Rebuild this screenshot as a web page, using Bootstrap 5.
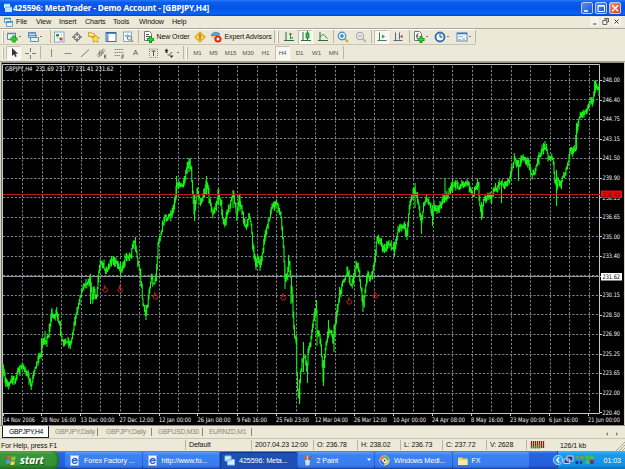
<!DOCTYPE html>
<html lang="en">
  <head>
    <meta charset="UTF-8" />
    <meta name="viewport" content="width=device-width, initial-scale=1.0" />
    <title>425596: MetaTrader - Demo Account - [GBPJPY,H4]</title>
    <link
      href="https://cdn.jsdelivr.net/npm/bootstrap@5.3.0/dist/css/bootstrap.min.css"
      rel="stylesheet"
    />
    <style>
      body {
        width: 625px;
        height: 469px;
        overflow: hidden;
        background: #ece9d8;
        color: #111;
        font-family: "Liberation Sans", Arial, sans-serif;
        font-size: 7px;
        line-height: 9px;
        letter-spacing: -0.1px;
      }
      svg {
        display: block;
        flex: none;
      }
      .title-bar {
        height: 16px;
        background: linear-gradient(#2a7af5, #0a5cf0 15%, #0453e0 50%, #0663fb 85%, #0344bf);
        color: #fff;
        font: bold 8.2px "Noto Sans", sans-serif;
        letter-spacing: -0.1px;
      }
      .gap-thin {
        gap: 1.5px;
      }
      .win-btn {
        width: 12.5px;
        height: 12.5px;
        border: 1px solid #b9cdf8;
        border-radius: 2px;
        background: linear-gradient(135deg, #5b8df5, #1c4fd8);
      }
      .win-close {
        background: linear-gradient(135deg, #f09a7e, #cf3a12);
      }
      .menu-bar {
        display: grid;
        grid-template-columns: 16px 20px 23px 26px 28px 26px 33px 1fr auto;
        height: 12px;
        font-size: 7.2px;
      }
      .mdi-btn {
        width: 9.5px;
        height: 9px;
        background: #f5f3ea;
      }
      .tool-rows {
        height: 34px;
        border-top: 1px solid #aca899;
        border-bottom: 1px solid #aca899;
      }
      .tool-row {
        display: grid;
        align-items: center;
        justify-items: center;
        height: 16px;
        white-space: nowrap;
      }
      .row-main {
        width: 476px;
        border-top: 1px solid #fff;
        border-bottom: 1px solid #c9c5b2;
        grid-template-columns:
          6px 12px 9px 12px 9px 4px 14px 21px 13px 21px 13px 8px 14px 34px 19px 14px
          50px 2px 6px 16px 17px 18px 2px 18px 17px 4px 17px 16px 6px 13px 9px 12px 10px
          12px 6px 2px;
      }
      .row-draw {
        width: 344px;
        font-size: 6.2px;
        color: #555;
        grid-template-columns:
          6px 15px 17px 4px repeat(7, 17px) 15px 6px 2px 6px 15px 17px 17px 18px
          repeat(5, 17px) 2px;
      }
      .text-tool {
        font-size: 7.5px;
      }
      .grip {
        width: 2px;
        height: 12px;
        border-left: 1px solid #fff;
        border-right: 1px solid #b5b19f;
      }
      .rule {
        width: 1px;
        height: 13px;
        background: #bab6a4;
      }
      .caret {
        justify-self: start;
        margin-left: 1px;
        border: 1.8px solid transparent;
        border-top-color: #111;
        border-bottom: 0;
      }
      .pressed {
        display: flex;
        align-items: center;
        justify-content: center;
        width: 15px;
        height: 14px;
        background: #f8f7f2;
        border: 1px solid #c3bfae;
        border-right-color: #fff;
        border-bottom-color: #fff;
      }
      .chart {
        height: 363px;
        background: #000;
      }
      .chart text {
        font-family: "DejaVu Sans Condensed", "DejaVu Sans", sans-serif;
        font-size: 6.2px;
        letter-spacing: 0;
        fill: #f4f4f4;
      }
      .sheet-tabs {
        display: grid;
        grid-template-columns: 2px 47px 49px 54px 51px 49px 1fr auto;
        height: 14px;
        border-top: 1px solid #8f8c80;
        color: #8a8778;
        font-size: 6.7px;
        letter-spacing: -0.2px;
      }
      .sheet-tab {
        height: 8px;
        margin-top: 2px;
        line-height: 8px;
        padding-left: 6px;
        border-right: 1px solid #8a8778;
      }
      .sheet-tab.active {
        height: 12px;
        margin-top: 0;
        line-height: 11px;
        background: #fff;
        color: #000;
        border: 1px solid #222;
        border-top: 0;
      }
      .status-bar {
        display: grid;
        align-items: center;
        grid-template-columns: 185px 66px 62px 44px 43px 42px 44px 40px 30px 1fr 9px;
        height: 13px;
        border-top: 1px solid #c9c5b2;
        white-space: nowrap;
      }
      .status-hint {
        padding-left: 1px;
      }
      .status-cell {
        height: 10px;
        padding-left: 3px;
        border-left: 1px solid #b9b5a4;
      }
      .task-bar {
        height: 18px;
        background: linear-gradient(#4a8cf5, #2765e0 15%, #245edb 80%, #1941a5);
        color: #fff;
        font-size: 7.2px;
        letter-spacing: -0.1px;
      }
      .start-btn {
        width: 59px;
        margin-right: 6px;
        padding-left: 6px;
        border-radius: 0 6px 6px 0;
        background: linear-gradient(#5fb45c, #3a963a 18%, #349234 75%, #236e24);
        box-shadow: inset -2px 0 2px #276f28;
        font: italic bold 10.5px "Noto Sans", sans-serif;
        text-shadow: 1px 1px 1px #1c4d1c;
      }
      .task-btn {
        width: 76.5px;
        height: 16px;
        border-radius: 2px;
        background: linear-gradient(#5d9bfa, #3c81f3 20%, #3a7cee 80%, #2c66d2);
        margin-right: 1px;
        white-space: nowrap;
      }
      .task-btn.current {
        background: #1e4fb5;
        box-shadow: inset 1px 1px 1px #123783;
      }
      .tray {
        width: 68px;
        background: linear-gradient(#3fb5f8, #189bec 20%, #1290e3 80%, #0d70b8);
        border-left: 1px solid #0d4da8;
      }
      .tray-icons {
        margin-left: -6px;
      }
    </style>
  </head>
  <body class="d-flex flex-column m-0">
    <!-- Title bar -->
    <header class="title-bar d-flex align-items-center">
      <svg width="9" height="10" viewBox="0 0 9 10" class="ms-1">
        <rect x="0" y="1" width="6" height="4" fill="#dff" />
        <rect x="1" y="4" width="7" height="5" fill="#bfe4fb" />
        <path d="M0 1h6M1 4h7" stroke="#5bb4ee" />
      </svg>
      <span class="flex-grow-1">425596: MetaTrader - Demo Account - [GBPJPY,H4]</span>
      <div class="d-flex pe-1 gap-thin">
        <div class="win-btn">
          <svg width="10" height="10"><path d="M2 8h4" stroke="#fff" stroke-width="1.6" /></svg>
        </div>
        <div class="win-btn">
          <svg width="10" height="10"><path d="M2 2.5h6.5v6H2zM2 3.2h6" fill="none" stroke="#fff" /></svg>
        </div>
        <div class="win-btn win-close">
          <svg width="10" height="10"><path d="M2.2 2.2l6 6M8.2 2.2l-6 6" stroke="#fff" stroke-width="1.4" /></svg>
        </div>
      </div>
    </header>

    <!-- Menu -->
    <nav class="menu-bar align-items-center">
      <svg width="9" height="10" viewBox="0 0 9 10" class="ms-1">
        <path d="M.5 1.5h6v4h-6zM2.5 4.5h6v5h-6z" fill="#e9f4fb" stroke="#6aa5cc" />
        <path d="M0 1.5h7M2 4.8h7" stroke="#3a8cc4" stroke-width="1.3" />
      </svg>
      <span>File</span><span>View</span><span>Insert</span><span>Charts</span><span>Tools</span><span>Window</span><span>Help</span>
      <div class="d-flex me-1 gap-thin">
        <div class="mdi-btn"><svg width="9" height="9"><path d="M3 7h3.5" stroke="#444" /></svg></div>
        <div class="mdi-btn"><svg width="9" height="9"><path d="M3.5 1.5h4v3.5h-1.5M1.8 3.5h4v4h-4zM3 2h5" fill="none" stroke="#555" stroke-width=".9" /></svg></div>
        <div class="mdi-btn"><svg width="9" height="9"><path d="M2.5 2.5l4 4M6.5 2.5l-4 4" stroke="#333" /></svg></div>
      </div>
    </nav>

    <!-- Toolbars -->
    <section class="tool-rows">
      <div class="tool-row row-main">
        <i class="grip"></i>
        <svg width="12" height="12"><path d="M1.5 2.5h8v6h-8z" fill="#eef6f0" stroke="#6b8f86" /><path d="M1 2.5h9" stroke="#4a90b8" stroke-width="1.5" /><path d="M8 4.5v7M4.5 8h7" stroke="#0a8a18" stroke-width="3.2" /><path d="M8 5v6M5 8h6" stroke="#2fd83c" stroke-width="1.5" /></svg>
        <i class="caret"></i>
        <svg width="12" height="12"><path d="M1.5 1.5h7v5h-7zM3.5 6.5h8v4h-8z" fill="#e4f0fa" stroke="#5c8fbd" /><path d="M1 2h8M2 4.5h8" stroke="#5f97c8" stroke-width="1.5" /></svg>
        <i class="caret"></i>
        <i class="rule"></i>
        <svg width="12" height="12"><rect x="1.5" y="1" width="9.5" height="10" fill="#f6fbff" stroke="#7da7c8" /><rect x="3" y="3" width="3" height="2.5" fill="#24a324" /><rect x="6.5" y="6.5" width="3" height="3" fill="#e23b23" /><path d="M4 7h1M8 4h1" stroke="#79b" /></svg>
        <svg width="12" height="12"><circle cx="6" cy="6" r="3.2" fill="none" stroke="#666" /><path d="M6 1v4M6 7v4M1 6h4M7 6h4" stroke="#555" /></svg>
        <svg width="12" height="12"><path d="M.5 1.5h3l1 1h2v3h-6z" fill="#fbe38b" stroke="#d5a32a" /><path d="M7.5 4l1.3 2.4 2.7.3-2 1.9.6 2.7-2.6-1.3L5 11.300l.5-2.7-2-1.9 2.7-.3z" fill="#ffe04a" stroke="#c79a16" stroke-width=".8" /></svg>
        <svg width="12" height="12"><rect x="1" y="1.5" width="10" height="9" fill="#fff" stroke="#3f6f9f" /><path d="M1 2h10" stroke="#2d68aa" stroke-width="1.5" /><path d="M2.5 3v7" stroke="#6d9dd0" stroke-width="2" /></svg>
        <svg width="12" height="12"><rect x="1.5" y="1" width="8" height="9.5" fill="#f5faff" stroke="#8caac6" /><path d="M3 4l1.5 2 1-2.5L7 6" fill="none" stroke="#48a" stroke-width=".8" /><circle cx="7.5" cy="7" r="2.2" fill="#d4e9f7" stroke="#5a87ad" /><path d="M9 8.5l2.2 2.5" stroke="#c49a3c" stroke-width="1.4" /></svg>
        <i class="rule"></i>
        <svg width="12" height="12"><path d="M1.5.5h5l2 2v7h-7z" fill="#fff" stroke="#777" /><path d="M3 3.5h3M3 5.5h3" stroke="#555" /><path d="M7.5 5v7M4 8.5h7" stroke="#0a8a18" stroke-width="3" /><path d="M7.5 5.5v6M4.5 8.5h6" stroke="#2fd83c" stroke-width="1.3" /></svg>
        <span>New Order</span>
        <svg width="12" height="12"><path d="M6 .8l5.2 5.2L6 11.2.8 6z" fill="#fbcf3a" stroke="#c48f14" /><path d="M6 3v3.8M6 7.7v1.3" stroke="#8a5a00" stroke-width="1.2" /></svg>
        <svg width="12" height="12"><path d="M1 4.5C2 1 7 0 10 3l-2 2H2z" fill="#55a5d8" stroke="#3a7fb0" stroke-width=".7" /><path d="M1.5 5h6v3.5c-2 1.5-5 .5-6-3.5z" fill="#f2cf62" /><circle cx="8" cy="8" r="3.5" fill="#d6281c" /><rect x="6.7" y="6.7" width="2.6" height="2.6" fill="#fff" /></svg>
        <span>Expert Advisors</span>
        <i class="rule"></i>
        <i class="grip"></i>
        <svg width="12" height="12"><path d="M3 1v9M1 9.5h10M6 3h1.5M7.5 7H10" fill="none" stroke="#2d6b45" /><path d="M7.5 2v6M7.5 3H9" stroke="#1b9a35" /></svg>
        <span class="pressed"><svg width="12" height="12"><path d="M3 1v9M1 9.5h10" stroke="#2d6b45" /><path d="M7.5 0v9" stroke="#1b8a2d" /><rect x="6" y="2" width="3" height="5" fill="#2fc43f" stroke="#147a22" stroke-width=".7" /></svg></span>
        <svg width="12" height="12"><path d="M3 1v9M1 9.5h10" stroke="#2d6b45" /><path d="M3 6c2-3 4-3 6 0l1.5 1.5" fill="none" stroke="#1b9a35" /></svg>
        <i class="rule"></i>
        <svg width="12" height="12"><path d="M7.5 7.5l3.5 3.5" stroke="#d5a436" stroke-width="2" /><circle cx="5" cy="5" r="3.8" fill="#dff1fd" stroke="#3f8cc8" stroke-width="1.2" /><path d="M5 3v4M3 5h4" stroke="#2470b4" stroke-width="1.2" /></svg>
        <svg width="12" height="12"><path d="M7.5 7.5l3.5 3.5" stroke="#bcb8ac" stroke-width="2" /><circle cx="5" cy="5" r="3.6" fill="#edece6" stroke="#aaa" stroke-width="1.1" /><path d="M3 5h4" stroke="#999" /></svg>
        <i class="rule"></i>
        <span class="pressed"><svg width="12" height="12"><path d="M3.5 1.5v8M1.5 9.5h9" stroke="#5a6a7a" /><path d="M6 3.5v4L9 5.5z" fill="#1fa338" /></svg></span>
        <svg width="12" height="12"><path d="M3.5 1.5v8M1.5 9.5h9M7.5 1.5v7" stroke="#5a6a7a" /><path d="M10.5 3.8v3.4L8 5.5z" fill="#c04030" /></svg>
        <i class="rule"></i>
        <svg width="12" height="12"><path d="M1.5.5h5l2 2v7h-7z" fill="#fff" stroke="#777" /><path d="M5.5 2.5c-2 0-1.5 2-1.5 5M3 5h2.5" fill="none" stroke="#444" /><path d="M8 5v7M4.5 8.5h7" stroke="#0a8a18" stroke-width="3" /><path d="M8 5.5v6M5 8.5h6" stroke="#2fd83c" stroke-width="1.3" /></svg>
        <i class="caret"></i>
        <svg width="12" height="12"><circle cx="6" cy="6" r="4.5" fill="#f3faff" stroke="#2f6fae" stroke-width="1.9" /><path d="M6 3v3h2.5" fill="none" stroke="#345" /></svg>
        <i class="caret"></i>
        <svg width="12" height="12"><rect x="1" y="2" width="10" height="8" fill="#f5faff" stroke="#5c8cb8" /><path d="M1 2.5h10" stroke="#3c7cb8" stroke-width="1.6" /><path d="M2.5 6l1.5-1 1.5 1 1.5-1M2.5 8.5h2M6 8h3" fill="none" stroke="#698" stroke-width=".8" /></svg>
        <i class="caret"></i>
        <i class="rule"></i>
      </div>

      <div class="tool-row row-draw">
        <i class="grip"></i>
        <span class="pressed"><svg width="10" height="11"><path d="M3 1v8l2-1.8L6.3 10l1.4-.7L6.4 6.7H9z" fill="#333" /></svg></span>
        <svg width="12" height="12"><path d="M6.5 1v4M6.5 8v4M1 6.5h4M8 6.5h4" stroke="#777" /></svg>
        <i class="rule"></i>
        <svg width="12" height="12"><path d="M6.5 2v8" stroke="#888" /></svg>
        <svg width="12" height="12"><path d="M2.5 6.5h7" stroke="#888" /></svg>
        <svg width="12" height="12"><path d="M2 10l8-7.5" stroke="#777" /></svg>
        <svg width="12" height="12"><path d="M1 8.5l7-7M2 10.5l7.5-7.5M4 3l-1 7M7 2l-2 7M2 6h6" stroke="#777" stroke-width=".8" /><path d="M10.5 8H8.5v3h2M8.5 9.5h1.5" fill="none" stroke="#555" stroke-width=".8" /></svg>
        <svg width="12" height="12"><path d="M1.5 2.5h9M1.5 5.5h9M1.5 8.5h6" stroke="#888" stroke-dasharray="1.5 .5" /><path d="M11 8h-2v4M9 10h2" fill="none" stroke="#555" stroke-width=".8" /></svg>
        <span class="text-tool">A</span>
        <svg width="12" height="12"><rect x="2.5" y="2" width="8" height="8.5" fill="none" stroke="#888" stroke-dasharray="1 1" /><path d="M4.5 4h4M6.5 4v5" stroke="#555" /></svg>
        <svg width="12" height="12"><path d="M3.5 1.5L5.5 4H4.5v2h-2V4h-1z" fill="#333" /><path d="M4.5 7l1.5 1.5L9 5" fill="none" stroke="#555" /><path d="M8.5 11L6.5 8.5h4z" fill="#333" /></svg>
        <i class="caret"></i>
        <i class="rule"></i>
        <i class="grip"></i>
        <span>M1</span><span>M5</span><span>M15</span><span>M30</span><span>H1</span><span class="pressed">H4</span><span>D1</span><span>W1</span><span>MN</span>
        <i class="rule"></i>
      </div>
    </section>

    <!-- Price chart, one unit = one pixel of the window -->
    <svg class="chart" width="625" height="363" viewBox="0 62 625 363">
      <rect x="0" y="62" width="625" height="363" />
      <path d="M0 62.5H625" stroke="#8f8d83" />
      <path d="M.5 62V425" stroke="#d6d3c5" />
      <path d="M1.5 63V425" stroke="#77756c" />
      <path d="M624.5 62V425" stroke="#d6d3c5" />
      <g id="grid" stroke="#7f858d" stroke-width="1" stroke-dasharray="2.2 1.7"></g>
      <path d="M2.5 425V64.500H599.5V413.500H3" fill="none" stroke="#c8c8c8" />
      <path d="M3 276.500H600" stroke="#8f979f" />
      <path id="bars" fill="none" stroke="#18ee18" stroke-width="1.1" />
      <path d="M3 194.500H600" stroke="#b81c1c" />
      <g id="signals" fill="none" stroke="#cc1a1a" stroke-width=".9"></g>
      <g id="labels"></g>
    </svg>

    <!-- Chart tabs -->
    <div class="sheet-tabs">
      <span></span>
      <span class="sheet-tab active">GBPJPY,H4</span>
      <span class="sheet-tab">GBPJPY,Daily</span>
      <span class="sheet-tab ps-2">GBPJPY,Daily</span>
      <span class="sheet-tab">GBPUSD,M30</span>
      <span class="sheet-tab">EURNZD,M1</span>
      <span></span>
      <svg width="18" height="8" class="mt-1 me-1"><path d="M5 2v4L3 4zM13 2v4l2-2z" fill="#8a8778" /></svg>
    </div>

    <!-- Status bar -->
    <footer class="status-bar">
      <span class="status-hint">For Help, press F1</span>
      <span class="status-cell">Default</span>
      <span class="status-cell">2007.04.23 12:00</span>
      <span class="status-cell">O: 236.78</span>
      <span class="status-cell">H: 238.02</span>
      <span class="status-cell">L: 236.73</span>
      <span class="status-cell">C: 237.72</span>
      <span class="status-cell">V: 2628</span>
      <span class="status-cell"><svg width="16" height="9"><path d="M1.5 1v7M3.5 1v7M5.5 1v7M7.5 1v7M9.5 1v7M11.5 1v7M13.5 1v7" stroke="#8c1f14" stroke-width="1.3" /><path d="M1.5 6v2.5M3.5 6v2.5M5.5 5v3.5M7.5 5v3.5M9.5 4v4.5" stroke="#3a8a1e" stroke-width="1.3" /></svg></span>
      <span class="ps-1">126/1 kb</span>
      <svg width="9" height="12"><path d="M0 12l9-9M3 12l6-6M6 12l3-3" stroke="#aaa694" /></svg>
    </footer>

    <!-- Taskbar -->
    <div class="task-bar d-flex align-items-center">
      <div class="start-btn d-flex align-items-center h-100">
        <svg width="14" height="12">
          <path d="M1.5 2q2-1 3.5 0L4.3 5.5q-2-1-3.5 0z" fill="#f0562c" />
          <path d="M5.8 2.3q2 1 4 0L9 6Q7 7 5.1 6z" fill="#7ed234" />
          <path d="M.7 6.3q2-1 3.5 0L3.5 10q-2-1-3.5 0z" fill="#4f9bf5" />
          <path d="M5 6.900q2 1 4 0l-.8 3.600q-2 1-4 0z" fill="#fcd33a" />
        </svg>
        <span>start</span>
      </div>
      <div class="d-flex">
        <div class="task-btn d-flex align-items-center gap-1 ps-1">
          <svg width="11" height="11"><rect x="1.5" y=".5" width="8" height="10" fill="#f4f8ff" stroke="#9bb6dd" /><path d="M8 7a2.500 2.500 0 1 1 .2-1.500H3" fill="none" stroke="#1f5fc8" stroke-width="1.3" /></svg>
          <span>Forex Factory ...</span>
        </div>
        <div class="task-btn d-flex align-items-center gap-1 ps-1">
          <svg width="11" height="11"><rect x="1.5" y=".5" width="8" height="10" fill="#f4f8ff" stroke="#9bb6dd" /><path d="M8 7a2.500 2.500 0 1 1 .2-1.500H3" fill="none" stroke="#1f5fc8" stroke-width="1.3" /></svg>
          <span>http://www.fo...</span>
        </div>
        <div class="task-btn current d-flex align-items-center gap-1 ps-1">
          <svg width="11" height="11"><path d="M1 1h6v5H1zM3.5 4.500h7v5.500h-7z" fill="#dcefff" stroke="#7fc0ee" /></svg>
          <span>425596: Meta...</span>
        </div>
        <div class="task-btn d-flex align-items-center gap-1 ps-1">
          <svg width="11" height="11"><path d="M3 5h5l-.7 5.500H3.700z" fill="#d7dce8" /><path d="M4 5L2 1" stroke="#e8552c" stroke-width="1.5" /><path d="M5.5 5V.5" stroke="#f2c53a" stroke-width="1.5" /><path d="M7 5l2-4" stroke="#c24a1c" stroke-width="1.5" /></svg>
          <span class="flex-grow-1">2 Paint</span>
          <svg width="8" height="4"><path d="M1 .5h4L3 3z" fill="#fff" /></svg>
        </div>
        <div class="task-btn d-flex align-items-center gap-1 ps-1">
          <svg width="11" height="11"><circle cx="5.5" cy="5.5" r="5" fill="#e8e8ee" /><path d="M5.5 5.500V1A4.500 4.500 0 0 0 1 5.500z" fill="#f07020" /><path d="M5.500 5.500V1A4.500 4.500 0 0 1 10 5.500z" fill="#4cb03a" /><path d="M5.500 5.500H1A4.500 4.500 0 0 0 5.500 10z" fill="#2a68c8" /><path d="M5.500 5.500H10A4.500 4.500 0 0 1 5.500 10z" fill="#f3c52c" /><circle cx="5.5" cy="5.5" r="2.3" fill="#fff" /><path d="M4.8 4.200v2.600L7 5.500z" fill="#223" /></svg>
          <span>Windows Medi...</span>
        </div>
        <div class="task-btn d-flex align-items-center gap-1 ps-1">
          <svg width="11" height="11"><path d="M1 2.500h4l1 1h4.500v6.500H1z" fill="#f6d358" /><path d="M1 5h9.500v5H1z" fill="#fdea9b" /></svg>
          <span>FX</span>
        </div>
      </div>
      <div class="tray ms-auto d-flex align-items-center justify-content-between h-100">
        <svg width="42" height="14" class="tray-icons">
          <circle cx="6" cy="7" r="4.7" fill="#3a9bf2" stroke="#bfe0ff" stroke-width=".8" />
          <path d="M7.2 4.500L4.800 7l2.400 2.500" fill="none" stroke="#fff" stroke-width="1.3" />
          <path d="M15 3h6v5h-6zM12 6h5.500v4.500H12z" fill="#28388c" stroke="#cfd8ee" />
          <path d="M23.500 3h3v2.500h-3zM28 3h4v3h-4z" fill="#7c9c3c" /><circle cx="25" cy="9.5" r="1.7" fill="#16309a" /><path d="M28 8h2v3h-2z" fill="#20408c" />
          <path d="M33.500 2.500h4V6h-4zM38.200 2.500h3.500V6h-3.500zM33.500 7h4v4h-4z" fill="#47c13c" /><rect x="38.2" y="7" width="3.5" height="4" fill="#6a2f8a" />
        </svg>
        <span class="pe-1">01:03</span>
      </div>
    </div>

    <script src="https://cdn.jsdelivr.net/npm/bootstrap@5.3.0/dist/js/bootstrap.bundle.min.js"></script>
    <script>
      const GRID_STEP = 19.55;
      const prices = [
        "248.00", "246.40", "244.75", "243.15", "241.50", "239.90", "238.25", "236.65", "235.00",
        "233.40", "", "230.15", "228.50", "226.90", "225.25", "223.65", "222.00", "220.40",
      ];
      const dates = [
        ["14 Nov 2006", 3, 32], ["28 Nov 16:00", 41, 35], ["13 Dec 00:00", 80.5, 34],
        ["27 Dec 12:00", 119.5, 34], ["12 Jan 00:00", 159, 32], ["26 Jan 08:00", 197.5, 33],
        ["9 Feb 16:00", 237, 30], ["25 Feb 23:00", 276, 33], ["12 Mar 04:00", 315, 33],
        ["26 Mar 12:00", 354, 33], ["10 Apr 00:00", 393, 33], ["24 Apr 08:00", 432, 33],
        ["8 May 16:00", 471, 32], ["23 May 00:00", 510, 35], ["6 Jun 16:00", 549, 29],
        ["21 Jun 00:00", 588, 32],
      ];
      const signals = [[105, 289], [120, 289], [155, 296], [283, 297], [349, 301], [375, 295]];
      // centre of the price range along the window, x then y
      const trend = [
        3,366, 5,382, 9,384, 11,378, 15,381, 18,371, 22,367, 27,373, 31,385, 34,374, 37,360, 41,356,
        43,338, 46,343, 49,332, 52,312, 54,317, 56,312, 58,319, 60,325, 61,338, 64,344, 66,340,
        69,344, 72,340, 74,325, 77,310, 81,293, 84,284, 88,283, 90,279, 92,298, 94,288, 96,300,
        97,293, 98,280, 100,262, 103,264, 106,273, 109,265, 114,260, 118,265, 121,273, 124,262,
        126,254, 128,259, 131,254, 133,244, 135,241, 137,258, 140,274, 143,305, 146,315, 149,292,
        151,277, 154,284, 156,276, 158,245, 160,236, 163,225, 165,216, 167,218, 171,215, 174,205,
        176,188, 178,183, 182,186, 186,172, 189,161, 191,170, 193,200, 194,212, 197,190, 200,202,
        203,195, 206,182, 208,190, 210,205, 213,214, 216,205, 218,194, 221,205, 224,226, 227,215,
        230,205, 233,193, 235,207, 237,216, 239,200, 242,210, 245,228, 247,225, 249,212, 251,225,
        253,250, 256,265, 258,257, 260,266, 263,250, 266,230, 269,220, 272,206, 276,203, 279,210,
        281,218, 283,245, 285,280, 287,275, 289,262, 291,280, 292,295, 294,333, 296,340, 297,384,
        299,398, 300,375, 302,362, 305,358, 307,370, 308,350, 311,340, 313,320, 316,306, 317,332,
        320,338, 322,362, 323,378, 325,348, 328,332, 331,330, 333,342, 335,325, 337,310, 339,298,
        342,285, 346,275, 348,272, 350,284, 353,281, 356,264, 359,272, 361,290, 363,304, 365,290,
        367,276, 370,279, 373,268, 375,255, 376,243, 378,240, 380,240, 384,250, 389,243, 394,251,
        397,235, 401,226, 404,228, 407,235, 409,207, 412,197, 414,190, 417,196, 420,215, 421,227,
        423,207, 427,199, 430,205, 432,215, 434,206, 437,211, 440,207, 443,197, 446,198, 448,193,
        452,185, 456,185, 460,188, 463,185, 467,183, 470,188, 473,197, 475,187, 478,184, 480,208,
        482,213, 484,198, 487,196, 491,199, 494,190, 497,189, 500,183, 503,186, 506,184, 509,181,
        512,170, 514,158, 517,164, 519,168, 521,158, 526,161, 529,164, 532,177, 535,170, 538,160,
        541,152, 545,146, 547,152, 550,162, 552,156, 553,160, 555,182, 557,188, 558,180, 561,184,
        564,174, 567,170, 569,153, 572,151, 575,149, 576,132, 579,120, 582,113, 587,113, 589,103,
        591,99, 593,102, 595,85, 598,87, 599,94,
      ];
      // long wicks: x, top, bottom
      const wicks = [
        [3, 364, 378], [52, 308, 318], [90.5, 276, 304], [41.5, 338, 356], [45, 331, 345], [113.5, 256, 265],
        [120.5, 262, 276], [146, 305, 320], [176.5, 176, 198], [189, 158, 172],
        [194.5, 195, 221], [206.5, 176, 195], [218.5, 191, 205], [233, 190, 208], [240, 195, 211],
        [256, 258, 270], [260, 256, 271], [285, 265, 289], [288.5, 255, 272], [291, 285, 304],
        [299.5, 380, 404], [303.5, 342, 372], [307.5, 365, 383], [316.5, 300, 312],
        [317, 310, 346], [323.5, 360, 386], [328.5, 320, 337], [334, 325, 352], [339.5, 287, 302],
        [363, 295, 312], [394.5, 242, 257], [407, 228, 240], [415, 183, 208], [421.5, 215, 234],
        [432.5, 205, 226], [445, 178, 202], [452.5, 179, 193], [481.5, 202, 220], [501.5, 185, 203],
        [518.5, 160, 181], [545, 141, 150], [556.5, 170, 206], [594.5, 81, 92], [576.5, 123, 150],
      ];

      const grid = [];
      for (let x = 22.5; x < 599; x += GRID_STEP) {
        grid.push(`<path d="M${Math.floor(x) + 0.5} 66V413" />`);
      }
      for (let y = 80.3; y < 412; y += GRID_STEP) {
        grid.push(`<path d="M3 ${Math.floor(y) + 0.5}H599" />`);
      }
      document.getElementById("grid").innerHTML = grid.join("");

      const noise = (n) => {
        const s = Math.sin(n * 127.1 + 11.7) * 43758.5453;
        return s - Math.floor(s);
      };
      let bars = "";
      let last = trend[1];
      for (let i = 0, x = 3.5; x < 599.5; x += 0.75) {
        while (i + 3 < trend.length - 1 && trend[i + 2] < x) i += 2;
        const t = (x - trend[i]) / (trend[i + 2] - trend[i]);
        const y = trend[i + 1] + t * (trend[i + 3] - trend[i + 1]) + (noise(x) - 0.5) * 4.5;
        const top = Math.min(y, last) - 0.4 - noise(x + 400) ** 2 * 4.5;
        const bottom = Math.max(y, last) + 0.4 + noise(x + 900) ** 2 * 4.5;
        bars += `M${x} ${top.toFixed(1)}V${bottom.toFixed(1)}`;
        last = y;
      }
      wicks.forEach(([x, top, bottom]) => (bars += `M${x} ${top}V${bottom}`));
      document.getElementById("bars").setAttribute("d", bars);

      document.getElementById("signals").innerHTML = signals
        .map(([x, y]) => `<path d="M${x - 0.5} ${y - 3.5}v3.5l-2 .5 1.5 2.5h3l1-2.5-2-1.5z" />`)
        .join("");

      const label = (text, x, y, width, color = "#f4f4f4") =>
        `<text x="${x}" y="${y}" textLength="${width}" lengthAdjust="spacingAndGlyphs" style="fill: ${color}">${text}</text>`;
      let labels = label("GBPJPY,H4&#160; 231.69 231.77 231.41 231.62", 5, 71, 108.5);
      prices.forEach((price, i) => {
        const y = 80.5 + i * GRID_STEP;
        labels += `<path d="M600 ${Math.floor(y) + 0.5}h2" stroke="#ccc" />`;
        if (price) labels += label(price, 602.5, y + 1.7, 17.5);
      });
      labels += '<rect x="601" y="190.5" width="21" height="7.5" fill="#f00808" />';
      labels += label("238.49", 602.5, 196.5, 17.5, "#6b0000");
      labels += '<rect x="601" y="273" width="21" height="7.5" fill="#fff" />';
      labels += label("231.62", 602.5, 279, 17.5, "#000");
      dates.forEach(([text, x, width]) => {
        labels += `<path d="M${Math.floor(x) + 0.5} 413v3" stroke="#ccc" />`;
        labels += label(text, x, 421.7, width);
      });
      document.getElementById("labels").innerHTML = labels;
    </script>
  </body>
</html>
